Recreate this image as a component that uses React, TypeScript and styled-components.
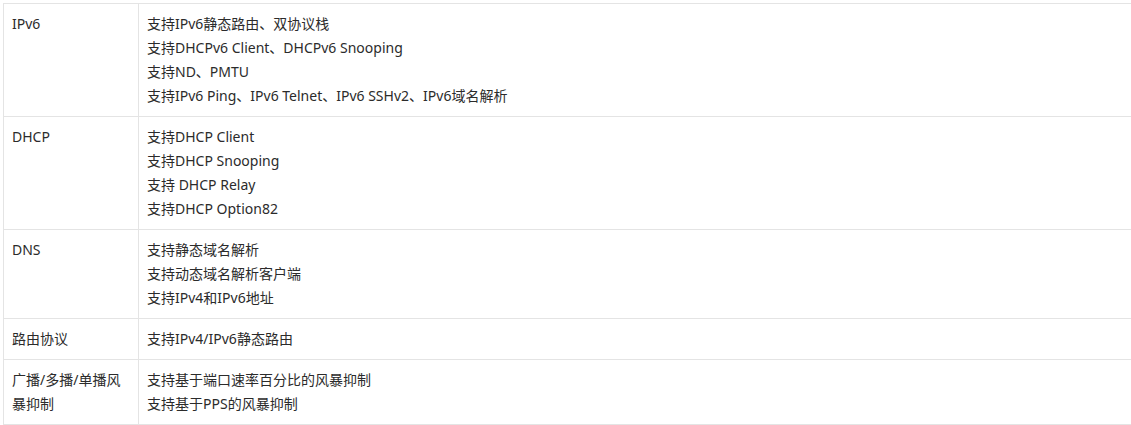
import React from "react";
import styled, { createGlobalStyle } from "styled-components";

const GlobalStyle = createGlobalStyle`
  html, body {
    margin: 0;
    padding: 0;
    background: #fff;
  }
`;

const Page = styled.div`
  padding: 3px 0 0 3px;
`;

const SpecTable = styled.table`
  width: 1129px;
  border-collapse: collapse;
  table-layout: fixed;
  font-family: "Noto Sans", "Noto Sans CJK SC", sans-serif;
  font-size: 14px;
  line-height: 24px;
  color: #2b2b2b;
`;

const Cell = styled.td<{ $first?: boolean }>`
  width: ${(p) => (p.$first ? "118px" : "auto")};
  border: 1px solid #e4e4e4;
  padding: 8px;
  vertical-align: top;
  word-break: break-all;
`;

const Line = styled.div``;

const rows: { name: string; items: string[] }[] = [
  {
    name: "IPv6",
    items: [
      "支持IPv6静态路由、双协议栈",
      "支持DHCPv6 Client、DHCPv6 Snooping",
      "支持ND、PMTU",
      "支持IPv6 Ping、IPv6 Telnet、IPv6 SSHv2、IPv6域名解析",
    ],
  },
  {
    name: "DHCP",
    items: [
      "支持DHCP Client",
      "支持DHCP Snooping",
      "支持 DHCP Relay",
      "支持DHCP Option82",
    ],
  },
  {
    name: "DNS",
    items: ["支持静态域名解析", "支持动态域名解析客户端", "支持IPv4和IPv6地址"],
  },
  { name: "路由协议", items: ["支持IPv4/IPv6静态路由"] },
  {
    name: "广播/多播/单播风暴抑制",
    items: ["支持基于端口速率百分比的风暴抑制", "支持基于PPS的风暴抑制"],
  },
];

export default function App() {
  return (
    <Page>
      <GlobalStyle />
      <SpecTable>
        <tbody>
          {rows.map((r) => (
            <tr key={r.name}>
              <Cell $first>{r.name}</Cell>
              <Cell>
                {r.items.map((t) => (
                  <Line key={t}>{t}</Line>
                ))}
              </Cell>
            </tr>
          ))}
        </tbody>
      </SpecTable>
    </Page>
  );
}
